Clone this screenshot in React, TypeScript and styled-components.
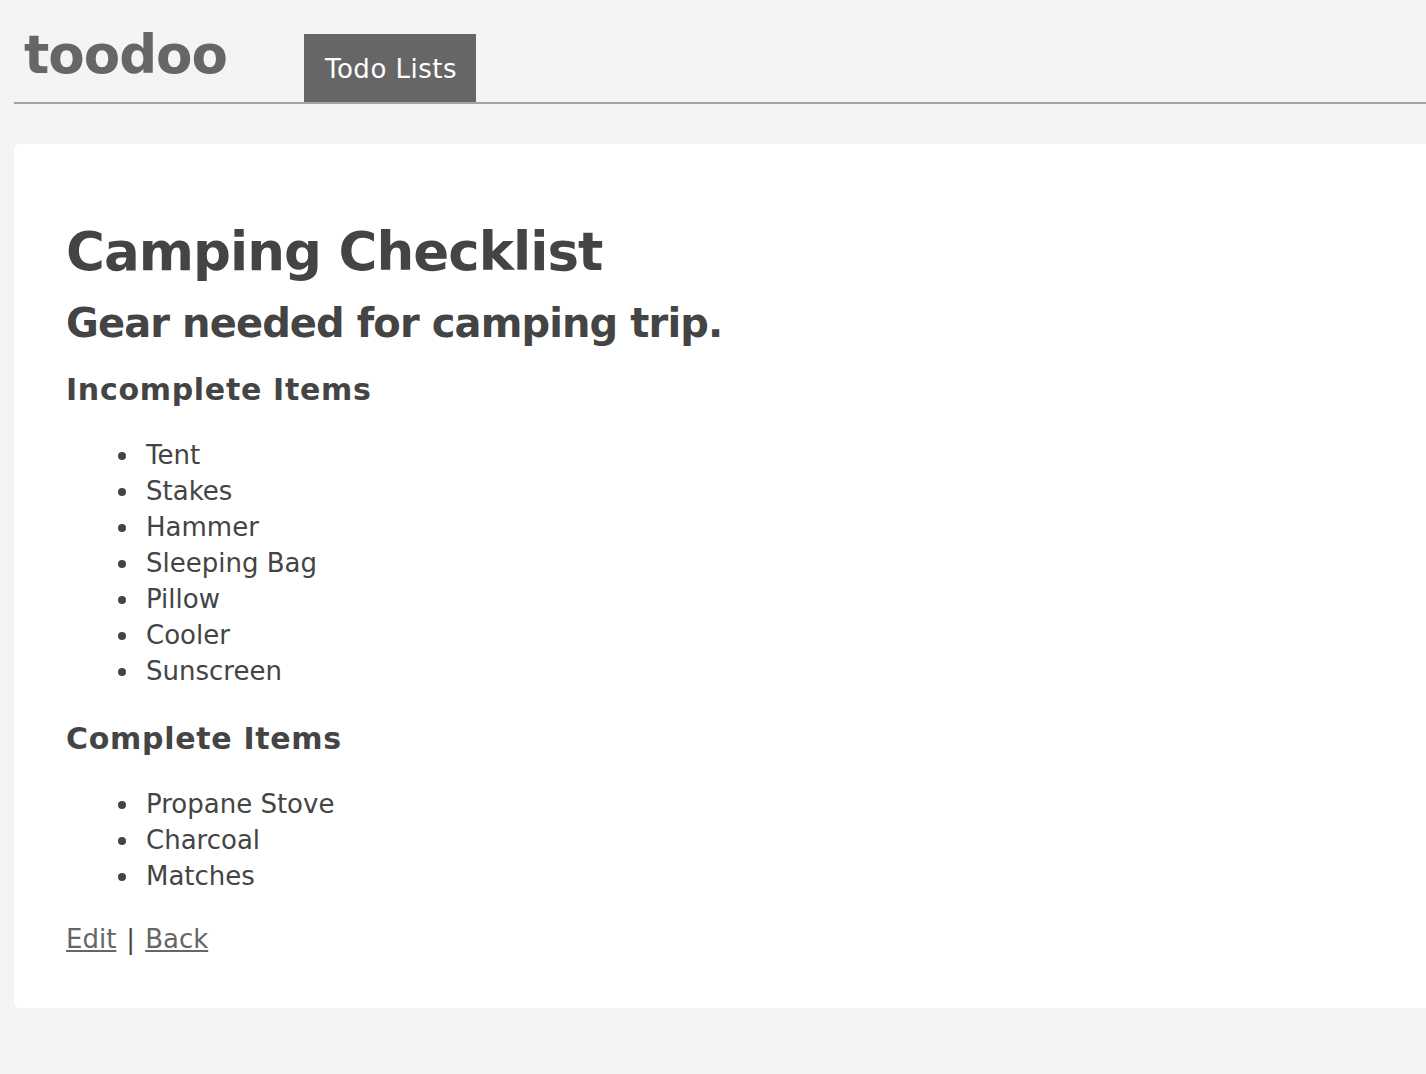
import React from "react";
import styled, { createGlobalStyle } from "styled-components";

const GlobalStyle = createGlobalStyle`
  html, body {
    margin: 0;
    padding: 0;
    background: #f4f4f4;
    font-family: "DejaVu Sans", Verdana, sans-serif;
    color: #444444;
  }
`;

const Page = styled.div`
  padding-left: 14px;
  min-height: 1074px;
  box-sizing: border-box;
  overflow: hidden;
`;

const Header = styled.header`
  display: flex;
  align-items: flex-end;
  height: 102px;
  border-bottom: 2px solid #a3a3a3;
`;

const Logo = styled.div`
  align-self: flex-start;
  margin: 28px 0 0 10px;
  width: 280px;
  font-size: 53px;
  line-height: 53px;
  font-weight: bold;
  letter-spacing: -1px;
  color: #666666;
`;

const Nav = styled.nav`
  display: flex;
  align-items: flex-end;
`;

const NavTab = styled.a<{ $active?: boolean }>`
  display: flex;
  align-items: center;
  height: 68px;
  box-sizing: border-box;
  padding: 2px 19px 0 21px;
  font-size: 26px;
  line-height: 30px;
  letter-spacing: 0.5px;
  color: ${(p) => (p.$active ? "#ffffff" : "#666666")};
  background: ${(p) => (p.$active ? "#666666" : "transparent")};
  text-decoration: none;
`;

const Card = styled.main`
  margin-top: 40px;
  background: #ffffff;
  border-radius: 6px 0 0 6px;
  padding: 78px 52px 51px;
`;

const Title = styled.h1`
  margin: 0;
  font-size: 53px;
  line-height: 60px;
  font-weight: bold;
  letter-spacing: -0.95px;
  color: #444444;
`;

const Subtitle = styled.h2`
  margin: 18px 0 0;
  font-size: 40px;
  line-height: 46px;
  font-weight: bold;
  letter-spacing: -0.9px;
  color: #444444;
`;

const SectionTitle = styled.h3<{ $gap: number }>`
  margin: ${(p) => p.$gap}px 0 0;
  font-size: 30px;
  line-height: 36px;
  font-weight: bold;
  letter-spacing: 0.7px;
  color: #444444;
`;

const ItemList = styled.ul`
  margin: 29px 0 0;
  padding-left: 75px;
  list-style: disc;
`;

const Item = styled.li`
  padding-left: 5px;
  font-size: 26px;
  line-height: 36px;
  color: #444444;
`;

const Actions = styled.div`
  margin-top: 27px;
  font-size: 26px;
  line-height: 36px;
  color: #444444;
`;

const ActionLink = styled.a`
  color: #666666;
  text-decoration: underline;
`;

const Separator = styled.span`
  margin: 0 10px;
`;

const incomplete = ["Tent", "Stakes", "Hammer", "Sleeping Bag", "Pillow", "Cooler", "Sunscreen"];
const complete = ["Propane Stove", "Charcoal", "Matches"];

export default function App() {
  return (
    <>
      <GlobalStyle />
      <Page>
        <Header>
          <Logo>toodoo</Logo>
          <Nav>
            <NavTab $active href="#">Todo Lists</NavTab>
          </Nav>
        </Header>
        <Card>
          <Title>Camping Checklist</Title>
          <Subtitle>Gear needed for camping trip.</Subtitle>
          <SectionTitle $gap={26}>Incomplete Items</SectionTitle>
          <ItemList>
            {incomplete.map((i) => (
              <Item key={i}>{i}</Item>
            ))}
          </ItemList>
          <SectionTitle $gap={32}>Complete Items</SectionTitle>
          <ItemList>
            {complete.map((i) => (
              <Item key={i}>{i}</Item>
            ))}
          </ItemList>
          <Actions>
            <ActionLink href="#">Edit</ActionLink>
            <Separator>|</Separator>
            <ActionLink href="#">Back</ActionLink>
          </Actions>
        </Card>
      </Page>
    </>
  );
}
